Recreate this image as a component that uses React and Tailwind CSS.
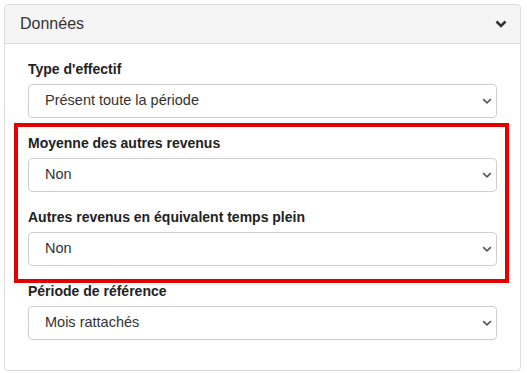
const fields = [
  { label: "Type d'effectif", value: 'Présent toute la période' },
  { label: 'Moyenne des autres revenus', value: 'Non' },
  { label: 'Autres revenus en équivalent temps plein', value: 'Non' },
  { label: 'Période de référence', value: 'Mois rattachés' },
];

const SelectBox = ({ value }) => (
  <div className="flex items-center justify-between h-[34px] border border-[#cfcfcf] rounded-[4px] bg-white pl-[16px] pr-[4px] text-[14.5px] text-[#333]">
    <span>{value}</span>
    <svg width="10" height="6" viewBox="0 0 10 6" fill="none">
      <path d="M1.2 1.2L5 4.8l3.8-3.6" stroke="#555" strokeWidth="1.6" />
    </svg>
  </div>
);

const App = () => {
  return (
    <div
      className="w-[527px] h-[373px] bg-white p-[4px] pr-[6px]"
      style={{ fontFamily: '"Liberation Sans", Arial, sans-serif' }}
    >
      <div className="border border-[#dcdcdc] rounded-[4px] h-[367px] overflow-hidden">
        <div className="flex items-center justify-between h-[39px] bg-[#f5f5f5] border-b border-[#dcdcdc] pl-[15px] pr-[13px]">
          <span className="text-[16px] text-[#333]">Données</span>
          <svg width="12" height="8" viewBox="0 0 12 8" fill="none">
            <path d="M1.5 1.5L6 6l4.5-4.5" stroke="#333" strokeWidth="2.6" />
          </svg>
        </div>
        <div className="relative pt-[15px] px-[23px]">
          {fields.map((f) => (
            <div key={f.label} className="mb-[15px]">
              <label className="block text-[14px] leading-[20px] font-bold text-[#222] mb-[5px]">
                {f.label}
              </label>
              <SelectBox value={f.value} />
            </div>
          ))}
          <div className="absolute left-[9px] top-[79px] w-[495px] h-[160px] border-[4px] border-[#e30000]" />
        </div>
      </div>
    </div>
  );
};

export default App;
